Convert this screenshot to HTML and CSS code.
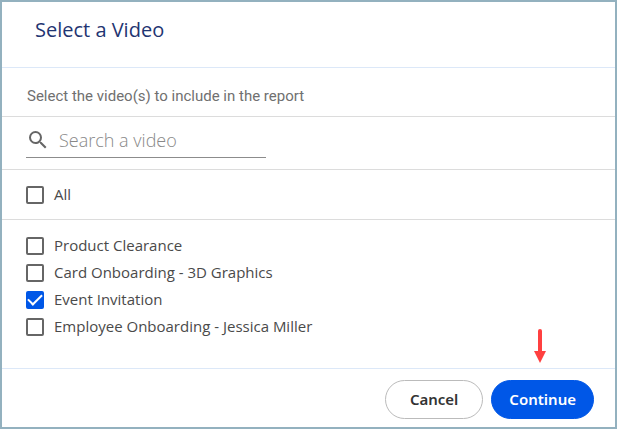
FILE: index.html
```html
<!DOCTYPE html>
<html lang="en">
  <head>
    <meta charset="UTF-8" />
    <meta name="viewport" content="width=device-width, initial-scale=1.0" />
    <title>Select a Video</title>
    <link rel="stylesheet" href="styles.css">
  </head>
  <body>
    <form class="dialog">
      <header class="dialog-header">
        <h1>Select a Video</h1>
      </header>

      <p class="intro">Select the video(s) to include in the report</p>

      <div class="search">
        <div class="search-field">
          <svg class="search-icon" viewBox="0 0 24 24" aria-hidden="true">
            <path d="M15.5 14h-.79l-.28-.27A6.47 6.47 0 0 0 16 9.5 6.5 6.5 0 1 0 9.5 16c1.61 0 3.09-.59 4.23-1.57l.27.28v.79l5 4.99L20.49 19l-4.99-5zm-6 0C7.01 14 5 11.99 5 9.5S7.01 5 9.5 5 14 7.01 14 9.5 11.99 14 9.5 14z" />
          </svg>
          <input type="text" placeholder="Search a video" aria-label="Search a video" />
        </div>
      </div>

      <div class="select-all">
        <label class="option"><input type="checkbox" /> <span>All</span></label>
      </div>

      <div class="videos">
        <label class="option"><input type="checkbox" /> <span>Product Clearance</span></label>
        <label class="option"><input type="checkbox" /> <span>Card Onboarding - 3D Graphics</span></label>
        <label class="option"><input type="checkbox" checked /> <span>Event Invitation</span></label>
        <label class="option"><input type="checkbox" /> <span>Employee Onboarding - Jessica Miller</span></label>
      </div>

      <footer class="dialog-footer">
        <button type="button" class="btn">Cancel</button>
        <div class="primary-action">
          <!-- Arrow pointing at the next step -->
          <svg class="arrow" viewBox="0 0 12 34" aria-hidden="true">
            <path d="M6 2v22" />
            <polygon points="0,22 12,22 6,34" />
          </svg>
          <button type="submit" class="btn btn-primary">Continue</button>
        </div>
      </footer>
    </form>
  </body>
</html>
```

FILE: styles.css
```css
* {
  box-sizing: border-box;
}
body {
  margin: 0;
  background: white;
  color: #4a4a4a;
  font-family: "Open Sans", sans-serif;
  font-size: 15px;
}
.dialog {
  display: flex;
  flex-direction: column;
  min-height: 100vh;
  border: 2px solid #93b1bf;
}
.dialog-header {
  padding: 14px 33px 24px;
  border-bottom: 1px solid #dce8f8;
}
h1 {
  margin: 0;
  color: #1f3572;
  font-size: 20px;
  font-weight: 400;
  line-height: 27px;
}
.intro {
  margin: 0;
  padding: 18px 25px 10px;
  border-bottom: 1px solid #dcdcdc;
  color: #707070;
  font-family: Roboto, sans-serif;
  font-size: 15px;
  line-height: 20px;
}
.search {
  padding: 6px 24px 11px;
  border-bottom: 1px solid #dcdcdc;
}
.search-field {
  display: flex;
  align-items: center;
  gap: 9px;
  width: 240px;
  height: 35px;
  border-bottom: 1px solid #8c8c8c;
}
.search-icon {
  flex: none;
  width: 24px;
  height: 24px;
  fill: #666;
}
.search-field input {
  flex: 1;
  min-width: 0;
  padding: 0;
  border: none;
  outline: none;
  background: none;
  color: #444;
  font-family: "Open Sans", sans-serif;
  font-size: 18px;
  font-weight: 300;
}
.search-field input::placeholder {
  color: #888;
  opacity: 1;
}
.select-all {
  padding: 11px 24px;
  border-bottom: 1px solid #dcdcdc;
}
.videos {
  flex: 1;
  padding: 12px 24px;
}
.option {
  display: flex;
  align-items: center;
  gap: 10px;
  line-height: 27px;
}
.option input {
  appearance: none;
  flex: none;
  width: 18px;
  height: 18px;
  margin: 0;
  border: 2px solid #666;
  border-radius: 2px;
  background: white;
}
.option input:checked {
  display: grid;
  place-items: center;
  border-color: #0057e7;
  background: #0057e7;
}
/* Tick */
.option input:checked::before {
  content: "";
  width: 12px;
  height: 6px;
  border: solid white;
  border-width: 0 0 2px 2px;
  transform: translateY(-2px) rotate(-45deg);
}
.dialog-footer {
  display: flex;
  justify-content: flex-end;
  gap: 8px;
  padding: 11px 21px 8px;
  border-top: 1px solid #dce8f8;
}
.btn {
  height: 39px;
  padding: 0 24px 2px;
  border: 1px solid #bbb;
  border-radius: 20px;
  background: white;
  color: #333;
  font-family: "Noto Sans", sans-serif;
  font-size: 15px;
  font-weight: 600;
  cursor: pointer;
}
.btn-primary {
  padding: 0 17px 2px;
  border-color: #0057e7;
  background: #0057e7;
  color: white;
}
.primary-action {
  position: relative;
}
.arrow {
  position: absolute;
  bottom: 100%;
  left: 50%;
  width: 12px;
  height: 34px;
  margin: 0 0 17px -9px;
  fill: #ff4040;
  stroke: #ff4040;
}
.arrow path {
  stroke-width: 4;
  stroke-linecap: round;
}
.arrow polygon {
  stroke: none;
}
```
